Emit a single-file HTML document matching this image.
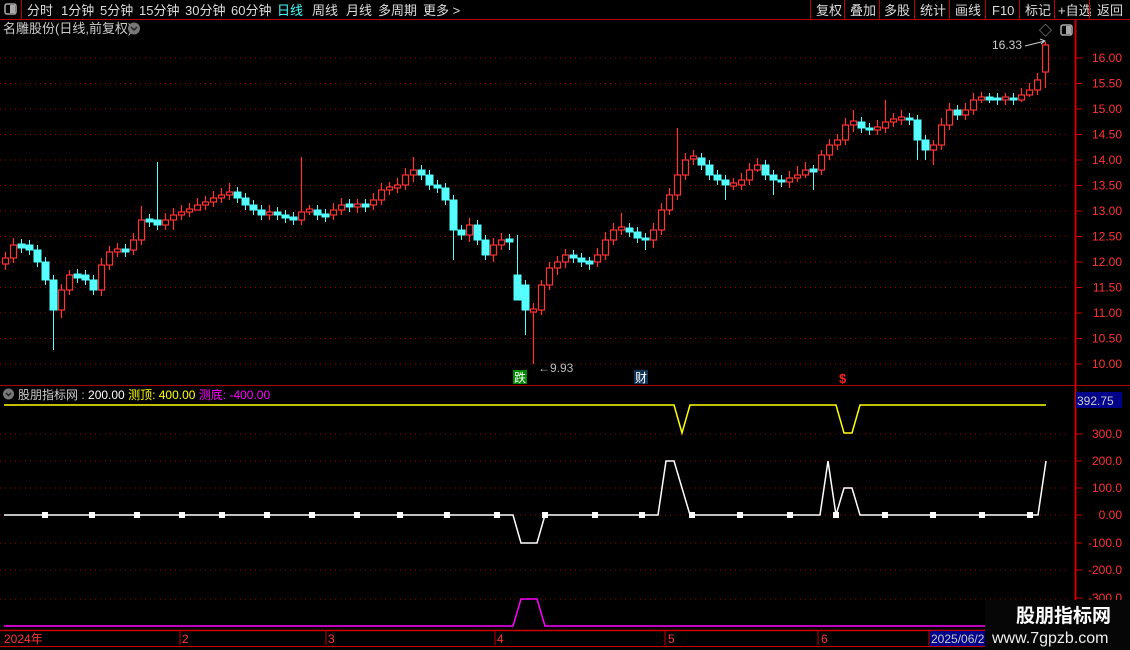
<!DOCTYPE html>
<html><head><meta charset="utf-8"><style>
body{margin:0;background:#000;width:1130px;height:650px;overflow:hidden;font-family:"Liberation Sans","Noto Sans CJK SC",sans-serif;}
svg{display:block}
</style></head><body>
<svg width="1130" height="650" xmlns="http://www.w3.org/2000/svg" font-family="Liberation Sans, Noto Sans CJK SC, sans-serif">
<rect width="1130" height="650" fill="#000"/>
<line x1="0" y1="19.5" x2="1130" y2="19.5" stroke="#b00" />
<line x1="21.5" y1="0" x2="21.5" y2="19" stroke="#b00"/>
<rect x="5" y="4" width="11" height="10" rx="2" fill="none" stroke="#aaa" stroke-width="1.5"/><rect x="10" y="5" width="5" height="8" fill="#aaa"/>
<g font-size="13" fill="#ddd">
<text x="27" y="15">分时</text><text x="61" y="15">1分钟</text><text x="100" y="15">5分钟</text><text x="139" y="15">15分钟</text><text x="185" y="15">30分钟</text><text x="231" y="15">60分钟</text>
<text x="277" y="15" fill="#4ff">日线</text><text x="312" y="15">周线</text><text x="346" y="15">月线</text><text x="378" y="15">多周期</text><text x="423" y="15">更多 &gt;</text>
<text x="816" y="15">复权</text><text x="850" y="15">叠加</text><text x="884" y="15">多股</text><text x="920" y="15">统计</text><text x="955" y="15">画线</text><text x="992" y="15">F10</text><text x="1025" y="15">标记</text><text x="1058" y="15">+自选</text><text x="1097" y="15">返回</text>
</g>
<g stroke="#b00"><line x1="810.5" y1="0" x2="810.5" y2="19"/><line x1="844.5" y1="0" x2="844.5" y2="19"/><line x1="879.5" y1="0" x2="879.5" y2="19"/><line x1="914.5" y1="0" x2="914.5" y2="19"/><line x1="949.5" y1="0" x2="949.5" y2="19"/><line x1="985.5" y1="0" x2="985.5" y2="19"/><line x1="1019.5" y1="0" x2="1019.5" y2="19"/><line x1="1054.5" y1="0" x2="1054.5" y2="19"/><line x1="1089.5" y1="0" x2="1089.5" y2="19"/></g>
<text x="3" y="33" font-size="13" fill="#ccc">名雕股份(日线,前复权)</text>
<circle cx="134" cy="28.5" r="6" fill="#777"/><path d="M131 27l3 3 3-3" stroke="#222" fill="none" stroke-width="1.5"/>
<text x="1039" y="35" font-size="13" fill="#aaa">◇</text>
<rect x="1061" y="25" width="11" height="10" rx="2" fill="none" stroke="#aaa" stroke-width="1.5"/><rect x="1066" y="26" width="5" height="8" fill="#aaa"/>
<line x1="1075.5" y1="20" x2="1075.5" y2="630" stroke="#c00" stroke-width="2"/>
<line x1="0" y1="385.5" x2="1130" y2="385.5" stroke="#a00"/>

<g stroke="#900" stroke-dasharray="1 4">
<line x1="0" y1="58" x2="1070" y2="58"/><line x1="0" y1="83.5" x2="1070" y2="83.5"/><line x1="0" y1="109" x2="1070" y2="109"/><line x1="0" y1="134.5" x2="1070" y2="134.5"/><line x1="0" y1="160" x2="1070" y2="160"/><line x1="0" y1="185.5" x2="1070" y2="185.5"/><line x1="0" y1="211" x2="1070" y2="211"/><line x1="0" y1="236.5" x2="1070" y2="236.5"/><line x1="0" y1="262" x2="1070" y2="262"/><line x1="0" y1="287.5" x2="1070" y2="287.5"/><line x1="0" y1="313" x2="1070" y2="313"/><line x1="0" y1="338.5" x2="1070" y2="338.5"/><line x1="0" y1="364" x2="1070" y2="364"/>
<line x1="0" y1="434" x2="1070" y2="434"/><line x1="0" y1="461" x2="1070" y2="461"/><line x1="0" y1="488" x2="1070" y2="488"/><line x1="0" y1="515" x2="1070" y2="515"/><line x1="0" y1="543" x2="1070" y2="543"/><line x1="0" y1="570" x2="1070" y2="570"/><line x1="0" y1="599" x2="1070" y2="599"/>
</g>
<path stroke="#c00" d="M1076 58h6M1076 83.5h6M1076 109h6M1076 134.5h6M1076 160h6M1076 185.5h6M1076 211h6M1076 236.5h6M1076 262h6M1076 287.5h6M1076 313h6M1076 338.5h6M1076 364h6M1076 434h6M1076 461h6M1076 488h6M1076 515h6M1076 543h6M1076 570h6M1076 598h6"/>
<g font-size="12" fill="#f33" text-anchor="end">
<text x="1122" y="62">16.00</text><text x="1122" y="87.5">15.50</text><text x="1122" y="113">15.00</text><text x="1122" y="138.5">14.50</text><text x="1122" y="164">14.00</text><text x="1122" y="189.5">13.50</text><text x="1122" y="215">13.00</text><text x="1122" y="240.5">12.50</text><text x="1122" y="266">12.00</text><text x="1122" y="291.5">11.50</text><text x="1122" y="317">11.00</text><text x="1122" y="342.5">10.50</text><text x="1122" y="368">10.00</text>
<text x="1122" y="438">300.0</text><text x="1122" y="465">200.0</text><text x="1122" y="492">100.0</text><text x="1122" y="519">0.00</text><text x="1122" y="547">-100.0</text><text x="1122" y="574">-200.0</text><text x="1122" y="602">-300.0</text>
</g>

<!-- cyan candles -->
<g stroke="#5ff" fill="#5ff">
<path fill="none" d="M21.5 239V253M29.5 240V255M37.5 245V267M45.5 257V285M53.5 275V350M77.5 269V283M85.5 270V285M93.5 275V295M125.5 244V257M149.5 214V227M157.5 162V230M237.5 187V203M245.5 193V210M253.5 200V215M261.5 205V220M277.5 207V220M285.5 210V223M293.5 212V225M317.5 205V220M325.5 209V222M349.5 199V212M365.5 199V212M421.5 165V180M429.5 170V190M437.5 180V193M445.5 183V205M453.5 195V260M461.5 225V240M477.5 220V245M485.5 235V260M509.5 234V250M517.5 235V290M525.5 280V335M573.5 250V263M581.5 253V267M589.5 257V270M629.5 223V237M637.5 227V243M645.5 233V250M701.5 153V170M709.5 160V180M717.5 170V185M725.5 175V200M765.5 160V180M773.5 170V195M781.5 175V187M813.5 165V190M861.5 117V133M869.5 123V135M909.5 113V125M917.5 115V160M925.5 135V160M957.5 105V120M989.5 93V103M997.5 93V105M1013.5 93V105"/>
<rect x="18" y="244" width="7" height="4"/><rect x="26" y="245" width="7" height="5"/><rect x="34" y="250" width="7" height="12"/><rect x="42" y="262" width="7" height="18"/><rect x="50" y="280" width="7" height="30"/><rect x="74" y="274" width="7" height="4"/><rect x="82" y="275" width="7" height="5"/><rect x="90" y="280" width="7" height="10"/><rect x="122" y="249" width="7" height="3"/><rect x="146" y="219" width="7" height="3"/><rect x="154" y="220" width="7" height="5"/><rect x="234" y="192" width="7" height="6"/><rect x="242" y="198" width="7" height="7"/><rect x="250" y="205" width="7" height="5"/><rect x="258" y="210" width="7" height="5"/><rect x="274" y="212" width="7" height="3"/><rect x="282" y="215" width="7" height="3"/><rect x="290" y="217" width="7" height="3"/><rect x="314" y="210" width="7" height="5"/><rect x="322" y="214" width="7" height="3"/><rect x="346" y="204" width="7" height="3"/><rect x="362" y="204" width="7" height="3"/><rect x="418" y="170" width="7" height="5"/><rect x="426" y="175" width="7" height="10"/><rect x="434" y="185" width="7" height="3"/><rect x="442" y="188" width="7" height="12"/><rect x="450" y="200" width="7" height="30"/><rect x="458" y="230" width="7" height="5"/><rect x="474" y="225" width="7" height="15"/><rect x="482" y="240" width="7" height="15"/><rect x="506" y="239" width="7" height="3"/><rect x="514" y="275" width="7" height="25"/><rect x="522" y="285" width="7" height="25"/><rect x="570" y="255" width="7" height="3"/><rect x="578" y="258" width="7" height="4"/><rect x="586" y="261" width="7" height="3"/><rect x="626" y="228" width="7" height="4"/><rect x="634" y="232" width="7" height="6"/><rect x="642" y="238" width="7" height="2"/><rect x="698" y="158" width="7" height="7"/><rect x="706" y="165" width="7" height="10"/><rect x="714" y="175" width="7" height="5"/><rect x="722" y="180" width="7" height="5"/><rect x="762" y="165" width="7" height="10"/><rect x="770" y="175" width="7" height="5"/><rect x="778" y="180" width="7" height="2"/><rect x="810" y="169" width="7" height="3"/><rect x="858" y="122" width="7" height="6"/><rect x="866" y="128" width="7" height="2"/><rect x="906" y="118" width="7" height="2"/><rect x="914" y="120" width="7" height="20"/><rect x="922" y="140" width="7" height="10"/><rect x="954" y="110" width="7" height="5"/><rect x="986" y="97" width="7" height="3"/><rect x="994" y="98" width="7" height="2"/><rect x="1010" y="98" width="7" height="2"/>
</g>
<!-- red candles -->
<g stroke="#f33" fill="#000" stroke-width="1.2">
<path d="M5.5 252V270M13.5 238V263M61.5 284V318M69.5 270V295M101.5 258V296M109.5 246V270M117.5 243V257M133.5 233V255M141.5 206V245M165.5 213V230M173.5 208V230M181.5 205V220M189.5 203V217M197.5 198V210M205.5 196V210M213.5 191V207M221.5 188V203M229.5 183V200M269.5 205V220M301.5 157V225M309.5 205V215M333.5 203V220M341.5 198V215M357.5 199V213M373.5 193V210M381.5 183V205M389.5 182V195M397.5 178V193M405.5 168V190M413.5 157V182M469.5 218V242M493.5 238V262M501.5 233V250M533.5 303V364M541.5 280V315M549.5 262V290M557.5 256V275M565.5 249V268M597.5 248V267M605.5 232V260M613.5 223V245M621.5 213V235M653.5 223V248M661.5 203V235M669.5 188V215M677.5 128V200M685.5 153V180M693.5 150V165M733.5 178V190M741.5 173V190M749.5 163V185M757.5 158V172M789.5 171V188M797.5 166V182M805.5 162V178M821.5 150V175M829.5 139V160M837.5 134V150M845.5 118V145M853.5 110V132M877.5 120V135M885.5 100V133M893.5 113V127M901.5 110V125M933.5 140V165M941.5 118V150M949.5 103V130M965.5 103V120M973.5 93V115M981.5 92V103M1005.5 93V105M1021.5 88V102M1029.5 83V97M1037.5 73V95M1045.5 42V88"/>
<rect x="2.5" y="258" width="6" height="6"/><rect x="10.5" y="245" width="6" height="13"/><rect x="58.5" y="290" width="6" height="20"/><rect x="66.5" y="275" width="6" height="15"/><rect x="98.5" y="265" width="6" height="25"/><rect x="106.5" y="252" width="6" height="13"/><rect x="114.5" y="249" width="6" height="3"/><rect x="130.5" y="240" width="6" height="10"/><rect x="138.5" y="220" width="6" height="20"/><rect x="162.5" y="220" width="6" height="5"/><rect x="170.5" y="215" width="6" height="5"/><rect x="178.5" y="212" width="6" height="3"/><rect x="186.5" y="209" width="6" height="3"/><rect x="194.5" y="205" width="6" height="5"/><rect x="202.5" y="202" width="6" height="3"/><rect x="210.5" y="198" width="6" height="4"/><rect x="218.5" y="195" width="6" height="3"/><rect x="226.5" y="192" width="6" height="3"/><rect x="266.5" y="212" width="6" height="3"/><rect x="298.5" y="212" width="6" height="8"/><rect x="306.5" y="209" width="6" height="3"/><rect x="330.5" y="210" width="6" height="5"/><rect x="338.5" y="205" width="6" height="5"/><rect x="354.5" y="204" width="6" height="3"/><rect x="370.5" y="200" width="6" height="5"/><rect x="378.5" y="190" width="6" height="10"/><rect x="386.5" y="187" width="6" height="3"/><rect x="394.5" y="185" width="6" height="3"/><rect x="402.5" y="175" width="6" height="10"/><rect x="410.5" y="170" width="6" height="5"/><rect x="466.5" y="225" width="6" height="10"/><rect x="490.5" y="245" width="6" height="10"/><rect x="498.5" y="240" width="6" height="5"/><rect x="530.5" y="309" width="6" height="3"/><rect x="538.5" y="285" width="6" height="25"/><rect x="546.5" y="268" width="6" height="17"/><rect x="554.5" y="262" width="6" height="6"/><rect x="562.5" y="255" width="6" height="7"/><rect x="594.5" y="255" width="6" height="7"/><rect x="602.5" y="240" width="6" height="15"/><rect x="610.5" y="230" width="6" height="10"/><rect x="618.5" y="227" width="6" height="3"/><rect x="650.5" y="230" width="6" height="10"/><rect x="658.5" y="210" width="6" height="20"/><rect x="666.5" y="195" width="6" height="15"/><rect x="674.5" y="175" width="6" height="20"/><rect x="682.5" y="160" width="6" height="15"/><rect x="690.5" y="156" width="6" height="3"/><rect x="730.5" y="183" width="6" height="3"/><rect x="738.5" y="180" width="6" height="5"/><rect x="746.5" y="170" width="6" height="10"/><rect x="754.5" y="165" width="6" height="5"/><rect x="786.5" y="178" width="6" height="4"/><rect x="794.5" y="175" width="6" height="3"/><rect x="802.5" y="170" width="6" height="5"/><rect x="818.5" y="155" width="6" height="15"/><rect x="826.5" y="145" width="6" height="10"/><rect x="834.5" y="140" width="6" height="5"/><rect x="842.5" y="125" width="6" height="15"/><rect x="850.5" y="121" width="6" height="4"/><rect x="874.5" y="127" width="6" height="3"/><rect x="882.5" y="122" width="6" height="6"/><rect x="890.5" y="119" width="6" height="3"/><rect x="898.5" y="117" width="6" height="3"/><rect x="930.5" y="145" width="6" height="5"/><rect x="938.5" y="125" width="6" height="20"/><rect x="946.5" y="110" width="6" height="15"/><rect x="962.5" y="110" width="6" height="5"/><rect x="970.5" y="100" width="6" height="10"/><rect x="978.5" y="97" width="6" height="3"/><rect x="1002.5" y="97" width="6" height="3"/><rect x="1018.5" y="95" width="6" height="5"/><rect x="1026.5" y="90" width="6" height="5"/><rect x="1034.5" y="80" width="6" height="10"/><rect x="1042.5" y="45" width="6" height="27"/>
</g>

<text x="992" y="49" font-size="12" fill="#ccc">16.33</text>
<path d="M1025 46 L1045 41 M1040 39 l5 2 -4 3" stroke="#ccc" fill="none"/>
<text x="538" y="372" font-size="12" fill="#bbb">←9.93</text>
<rect x="513" y="370" width="14" height="14" fill="#080"/><text x="514" y="382" font-size="12" fill="#fff">跌</text>
<rect x="634" y="370" width="14" height="14" fill="#135"/><text x="635" y="382" font-size="12" fill="#fff">财</text>
<text x="839" y="383" font-size="13" fill="#f22" font-weight="bold">$</text>
<circle cx="8.5" cy="394" r="5.5" fill="#777"/><path d="M6 393l2.5 2.5 2.5-2.5" stroke="#222" fill="none" stroke-width="1.5"/>
<text x="18" y="399" font-size="12" fill="#ccc">股朋指标网 : <tspan fill="#fff">200.00</tspan> <tspan fill="#ff0">测顶: 400.00</tspan> <tspan fill="#f0f">测底: -400.00</tspan></text>
<polyline fill="none" stroke="#ff0" stroke-width="1.5" points="4,405 674,405 682,433 690,405 836,405 844,433 852,433 860,405 1046,405"/>
<polyline fill="none" stroke="#fff" stroke-width="1.5" points="4,515 513,515 521,543 537,543 545,515 658,515 666,461 674,461 690,515 820,515 828,461 836,515 844,488 852,488 860,515 1038,515 1046,461"/>
<path fill="#fff" d="M42 512h6v6h-6zM89 512h6v6h-6zM134 512h6v6h-6zM179 512h6v6h-6zM219 512h6v6h-6zM264 512h6v6h-6zM309 512h6v6h-6zM354 512h6v6h-6zM397 512h6v6h-6zM444 512h6v6h-6zM494 512h6v6h-6zM542 512h6v6h-6zM592 512h6v6h-6zM639 512h6v6h-6zM689 512h6v6h-6zM737 512h6v6h-6zM787 512h6v6h-6zM833 512h6v6h-6zM882 512h6v6h-6zM930 512h6v6h-6zM979 512h6v6h-6zM1027 512h6v6h-6z"/>
<polyline fill="none" stroke="#f0f" stroke-width="1.5" points="4,626 513,626 521,599 537,599 545,626 1075,626"/>
<rect x="1076" y="392" width="46" height="16" fill="#008"/><text x="1077" y="405" font-size="12" fill="#ccc">392.75</text>
<line x1="0" y1="630.5" x2="1075" y2="630.5" stroke="#c00" stroke-width="1.5"/>
<line x1="0" y1="646.5" x2="1130" y2="646.5" stroke="#c00"/>
<g stroke="#c00"><line x1="180" y1="631" x2="180" y2="645"/><line x1="326" y1="631" x2="326" y2="645"/><line x1="495" y1="631" x2="495" y2="645"/><line x1="665" y1="631" x2="665" y2="645"/><line x1="818" y1="631" x2="818" y2="645"/><line x1="929" y1="631" x2="929" y2="645"/></g>
<g font-size="12" fill="#f33"><text x="4" y="643">2024年</text><text x="182" y="643">2</text><text x="328" y="643">3</text><text x="497" y="643">4</text><text x="668" y="643">5</text><text x="821" y="643">6</text></g>
<rect x="930" y="631" width="55" height="15" fill="#008"/><text x="931" y="643" font-size="12" fill="#ccc">2025/06/2</text>
<rect x="985" y="600" width="145" height="50" fill="#060606"/>
<text x="1016" y="622" font-size="19" font-weight="bold" fill="#fff">股朋指标网</text>
<text x="992" y="643" font-size="16" fill="#eee">www.7gpzb.com</text>
</svg>
</body></html>
